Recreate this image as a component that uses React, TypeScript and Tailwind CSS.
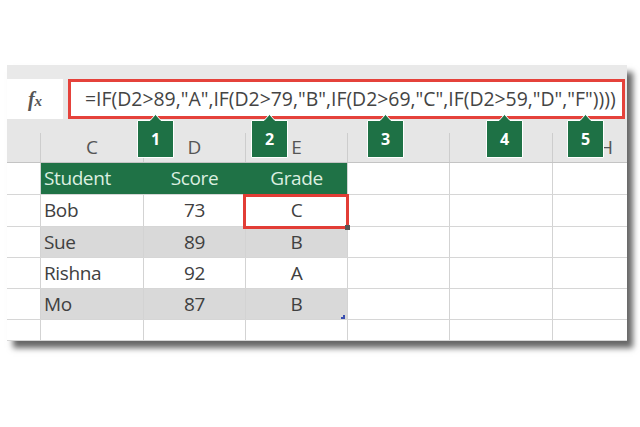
import React from "react";

const font = { fontFamily: '"Open Sans", "Noto Sans", sans-serif' };

const colWidths = [103, 102, 102, 102, 103, 75];
const letters = ["C", "D", "E", "", "", "H"];

type Row = { h: string; cells: string[]; kind: "head" | "white" | "gray" | "empty" };

const rows: Row[] = [
  { h: "h-[32px]", cells: ["Student", "Score", "Grade"], kind: "head" },
  { h: "h-[32px]", cells: ["Bob", "73", "C"], kind: "white" },
  { h: "h-[31px]", cells: ["Sue", "89", "B"], kind: "gray" },
  { h: "h-[31px]", cells: ["Rishna", "92", "A"], kind: "white" },
  { h: "h-[31px]", cells: ["Mo", "87", "B"], kind: "gray" },
  { h: "h-[21px]", cells: ["", "", ""], kind: "empty" },
];

const callouts = [
  { n: "1", left: 130 },
  { n: "2", left: 244 },
  { n: "3", left: 360 },
  { n: "4", left: 479 },
  { n: "5", left: 560 },
];

function Callout({ n, left }: { n: string; left: number }) {
  return (
    <div className="absolute top-[48px] w-[37px] h-[45px]" style={{ left }}>
      <svg width="37" height="45" viewBox="0 0 37 45" className="absolute inset-0">
        <path
          d="M0.5 7.5 H13 L18.5 1.5 L24 7.5 H36.5 V44.5 H0.5 Z"
          fill="#1e7145"
          stroke="#ffffff"
          strokeWidth="1"
        />
      </svg>
      <div
        className="absolute left-0 right-0 top-[8px] h-[36px] flex items-center justify-center text-white font-bold text-[16px]"
        style={font}
      >
        {n}
      </div>
    </div>
  );
}

export default function App() {
  return (
    <div className="w-[640px] h-[427px] bg-white pt-[65px] pl-[7px] overflow-hidden">
      <div className="relative w-[620px] h-[276px] bg-white shadow-[6px_7px_6px_rgba(0,0,0,0.6)]">
        <div className="h-[14px] bg-[#e9e9e9]" />
        <div className="flex h-[40px] bg-[#e9e9e9]">
          <div className="w-[56px] bg-white flex items-center justify-center">
            <span
              className="italic font-bold text-[#555] text-[20px] leading-none"
              style={{ fontFamily: '"Liberation Serif", serif' }}
            >
              f<span className="text-[15px]">x</span>
            </span>
          </div>
          <div
            className="ml-[5px] w-[557px] border-[3px] border-[#e5423b] bg-white flex items-center pl-[14px] text-[#444] text-[19.4px] whitespace-nowrap"
            style={font}
          >
            =IF(D2&gt;89,"A",IF(D2&gt;79,"B",IF(D2&gt;69,"C",IF(D2&gt;59,"D","F"))))
          </div>
        </div>
        <div className="flex h-[44px] bg-[#e6e6e6] border-b border-[#c4c4c4]">
          <div className="w-[33px]" />
          {letters.map((l, i) => (
            <div
              key={i}
              className={`mt-[14px] border-l border-[#cdcdcd] flex items-center ${
                i === 5 ? "justify-end pr-[14px]" : "justify-center"
              } text-[#555] text-[19px]`}
              style={{ width: colWidths[i], ...font }}
            >
              {l}
            </div>
          ))}
        </div>
        {rows.map((r, ri) => (
          <div key={ri} className={`flex ${r.h} border-b border-[#d6d6d6]`}>
            <div className="w-[33px] bg-white" />
            {colWidths.map((w, ci) => {
              const inTable = ci < 3 && r.kind !== "empty";
              const bg =
                inTable && r.kind === "head"
                  ? "bg-[#1f7246] text-[#dcefe0]"
                  : inTable && r.kind === "gray"
                  ? "bg-[#d9d9d9] text-[#404040]"
                  : "bg-white text-[#404040]";
              const align = ci === 0 ? "justify-start pl-[3px]" : "justify-center";
              const border =
                r.kind === "head" && ci > 0 && ci < 3
                  ? "border-l border-[#1f7246]"
                  : "border-l border-[#d3d3d3]";
              return (
                <div
                  key={ci}
                  className={`flex items-center ${align} ${bg} ${border} text-[19px] tracking-[-0.4px]`}
                  style={{ width: w, ...font }}
                >
                  {ci < 3 ? r.cells[ci] : ""}
                </div>
              );
            })}
          </div>
        ))}
        {/* selected cell */}
        <div className="absolute left-[236px] top-[129px] w-[106px] h-[35px] border-[3px] border-[#e23d36]" />
        <div className="absolute left-[338px] top-[160px] w-[5px] h-[5px] bg-[#555]" />
        {/* table resize handle */}
        <div className="absolute left-[334px] top-[250px] w-[4px] h-[4px] border-r-2 border-b-2 border-[#3a4fb0]" />
        {callouts.map((c) => (
          <Callout key={c.n} n={c.n} left={c.left} />
        ))}
      </div>
    </div>
  );
}
